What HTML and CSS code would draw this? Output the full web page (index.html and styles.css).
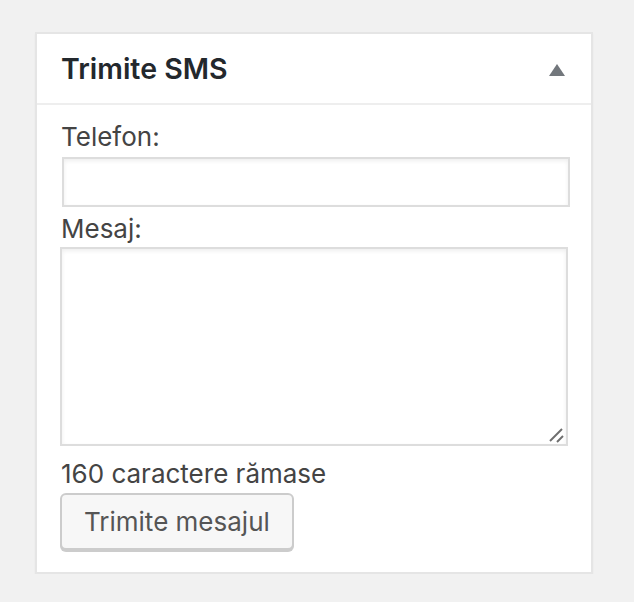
FILE: index.html
```html
<!DOCTYPE html>
<html lang="ro">
<head>
<meta charset="utf-8">
<title>Trimite SMS</title>
<link rel="stylesheet" href="styles.css">
</head>
<body>
<div class="postbox">
  <div class="postbox-header">
    <h2 class="postbox-title">Trimite SMS</h2>
    <span class="toggle-arrow"></span>
  </div>
  <div class="postbox-inside">
    <label class="field-label" for="tel">Telefon:</label>
    <input class="text-input" id="tel" type="text">
    <label class="field-label" for="msg">Mesaj:</label>
    <div class="area-wrap">
      <textarea class="text-area" id="msg"></textarea>
      <svg class="grip" width="16" height="16" viewBox="0 0 16 16">
        <line x1="2" y1="14" x2="14" y2="2" stroke="#6e6e6e" stroke-width="2"/>
        <line x1="9" y1="15" x2="15" y2="9" stroke="#6e6e6e" stroke-width="2"/>
      </svg>
    </div>
    <div class="counter">160 caractere rămase</div>
    <button class="button" type="button">Trimite mesajul</button>
  </div>
</div>
</body>
</html>
```

FILE: styles.css
```css
html, body {
  margin: 0;
  padding: 0;
  background: #f1f1f1;
}
body {
  padding: 32px 0 0 35px;
  font-family: Inter, "Liberation Sans", sans-serif;
  color: #444;
}
.postbox {
  box-sizing: border-box;
  width: 558px;
  height: 542px;
  background: #fff;
  border: 2px solid #e5e5e5;
  box-shadow: 0 2px 2px rgba(0,0,0,0.04);
}
.postbox-header {
  display: flex;
  align-items: center;
  justify-content: space-between;
  height: 69px;
  padding: 0 26px 0 24px;
  border-bottom: 2px solid #eee;
}
.postbox-title {
  margin: 0;
  font-size: 28.5px;
  font-weight: 600;
  color: #23282d;
}
.toggle-arrow {
  width: 0;
  height: 0;
  border-left: 8px solid transparent;
  border-right: 8px solid transparent;
  border-bottom: 12px solid #72777c;
  margin-top: 2px;
}
.postbox-inside {
  display: flex;
  flex-direction: column;
  align-items: flex-start;
  padding: 14px 24px 0 23px;
}
.field-label {
  font-size: 26px;
  line-height: 36px;
  margin-left: 1px;
  color: #444;
}
.text-input {
  box-sizing: border-box;
  width: 508px;
  height: 50px;
  margin: 2px 0 4px 2px;
  border: 2px solid #ddd;
  box-shadow: inset 0 2px 4px rgba(0,0,0,0.07);
  background: #fff;
  padding: 0;
}
.area-wrap {
  position: relative;
  margin: 0 0 10px 0;
  line-height: 0;
}
.text-area {
  box-sizing: border-box;
  display: block;
  width: 508px;
  height: 199px;
  margin: 0;
  border: 2px solid #ddd;
  box-shadow: inset 0 2px 4px rgba(0,0,0,0.07);
  background: #fff;
  padding: 0;
  resize: none;
}
.grip {
  position: absolute;
  right: 4px;
  bottom: 3px;
  pointer-events: none;
}
.counter {
  font-size: 26px;
  line-height: 36px;
  margin-left: 1px;
  color: #444;
}
.button {
  box-sizing: border-box;
  height: 57px;
  margin-top: 1px;
  padding: 0 22px;
  font-family: inherit;
  font-size: 26px;
  color: #555;
  background: #f7f7f7;
  border: 2px solid #ccc;
  border-radius: 6px;
  box-shadow: 0 2px 0 #ccc;
}
```
